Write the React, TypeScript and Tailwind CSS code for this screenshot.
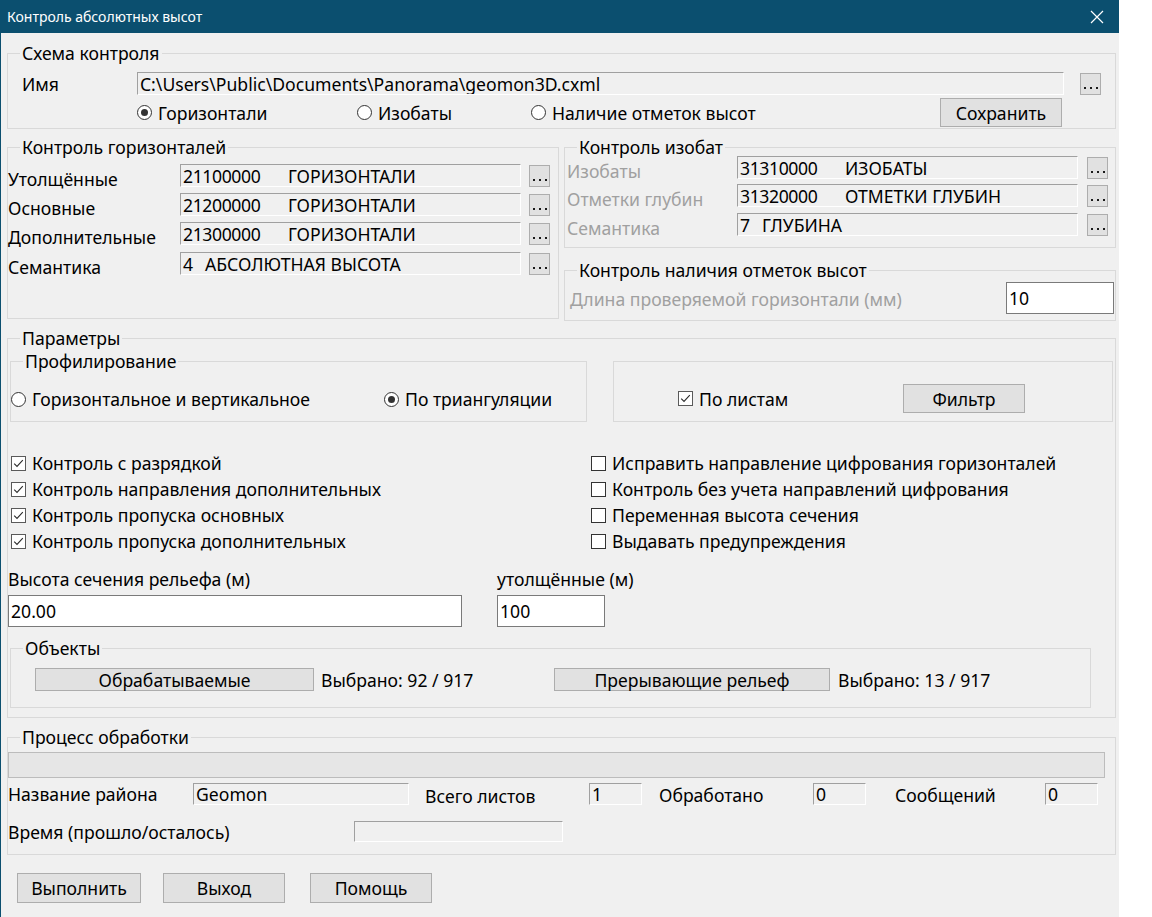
import React from "react";

type Kids = { children?: React.ReactNode; className?: string };

function Legend({ children, className = "" }: Kids) {
  return (
    <div className={`-mt-[10px] ml-[12px] w-fit bg-[#f0f0f0] px-[2px] leading-[18px] ${className}`}>
      {children}
    </div>
  );
}

function Radio({ checked }: { checked?: boolean }) {
  return (
    <span className="inline-flex h-[15px] w-[15px] shrink-0 items-center justify-center rounded-full border border-[#333333] bg-white">
      {checked && <span className="h-[7px] w-[7px] rounded-full bg-[#333333]" />}
    </span>
  );
}

function Check({ checked }: { checked?: boolean }) {
  return (
    <span
      className={`inline-flex h-[15px] w-[15px] shrink-0 items-center justify-center border bg-white ${
        checked ? "border-[#5a5a5a]" : "border-[#333333]"
      }`}
    >
      {checked && (
        <svg width="13" height="13" viewBox="0 0 13 13">
          <path d="M2.2 6.6 L5 9.4 L10.8 3.2" fill="none" stroke="#2b2b2b" strokeWidth="1.1" />
        </svg>
      )}
    </span>
  );
}

function Box({ children, className = "" }: Kids) {
  return (
    <div
      className={`flex items-center overflow-hidden whitespace-nowrap border border-t-[#a0a0a0] border-l-[#a0a0a0] border-r-white border-b-white bg-[#f0f0f0] pl-[2px] ${className}`}
    >
      {children}
    </div>
  );
}

function WhiteInput({ children, className = "" }: Kids) {
  return (
    <div className={`flex items-center border border-[#7a7a7a] bg-white pl-[2px] ${className}`}>{children}</div>
  );
}

function Btn({ children, className = "" }: Kids) {
  return (
    <div className={`flex items-center justify-center border border-[#adadad] bg-[#e1e1e1] ${className}`}>
      {children}
    </div>
  );
}

function Dots({ className = "" }: Kids) {
  return (
    <div
      className={`flex h-[22px] w-[21px] shrink-0 items-end justify-center gap-[4px] border border-[#adadad] bg-[#e1e1e1] pb-[5px] ${className}`}
    >
      <span className="h-[2px] w-[2px] bg-[#1a1a1a]" />
      <span className="h-[2px] w-[2px] bg-[#1a1a1a]" />
      <span className="h-[2px] w-[2px] bg-[#1a1a1a]" />
    </div>
  );
}

function Code({ code, name, wide = true }: { code: string; name: string; wide?: boolean }) {
  return (
    <>
      <span className={wide ? "w-[105px] shrink-0 tracking-[-0.4px]" : "w-[22px] shrink-0"}>{code}</span>
      <span>{name}</span>
    </>
  );
}

const horiz = [
  { label: "Утолщённые", code: "21100000", name: "ГОРИЗОНТАЛИ", mt: "mt-[8px]" },
  { label: "Основные", code: "21200000", name: "ГОРИЗОНТАЛИ", mt: "mt-[6px]" },
  { label: "Дополнительные", code: "21300000", name: "ГОРИЗОНТАЛИ", mt: "mt-[6px]" },
  { label: "Семантика", code: "4", name: "АБСОЛЮТНАЯ ВЫСОТА", mt: "mt-[7px]" },
];

const isobath = [
  { label: "Изобаты", code: "31310000", name: "ИЗОБАТЫ", mt: "mt-0" },
  { label: "Отметки глубин", code: "31320000", name: "ОТМЕТКИ ГЛУБИН", mt: "mt-[5px]" },
  { label: "Семантика", code: "7", name: "ГЛУБИНА", mt: "mt-[6px]" },
];

const checks = [
  ["Контроль с разрядкой", true, "Исправить направление цифрования горизонталей", false],
  ["Контроль направления дополнительных", true, "Контроль без учета направлений цифрования", false],
  ["Контроль пропуска основных", true, "Переменная высота сечения", false],
  ["Контроль пропуска дополнительных", true, "Выдавать предупреждения", false],
] as const;

export default function App() {
  return (
    <div className="h-[917px] w-[1152px] overflow-hidden bg-white font-['Noto_Sans',sans-serif] text-[17.6px] leading-[20px] text-black">
      <div className="h-[917px] w-[1119px] border-l border-[#0b4f6f] bg-[#f0f0f0]">
        {/* title bar */}
        <div className="-ml-px flex h-[33px] items-center bg-[#0b4f6f] pl-[7px] text-[14px] text-white">
          <span>Контроль абсолютных высот</span>
          <svg className="ml-auto mr-[15px]" width="14" height="14" viewBox="0 0 14 14">
            <path d="M1 1 L13 13 M13 1 L1 13" stroke="white" strokeWidth="1.2" />
          </svg>
        </div>

        <div className="pl-[6px] pr-[3px]">
          {/* Схема контроля */}
          <div className="mt-[20px] h-[76px] border border-[#d9d9d9]">
            <Legend>Схема контроля</Legend>
            <div className="mt-[10px] flex h-[23px] items-center">
              <span className="ml-[14px] w-[115px] shrink-0">Имя</span>
              <Box className="h-[23px] w-[927px]">C:\Users\Public\Documents\Panorama\geomon3D.cxml</Box>
              <Dots className="ml-[16px]" />
            </div>
            <div className="mt-[3px] flex h-[29px] items-center">
              <div className="ml-[129px] flex w-[220px] items-center gap-[6px]">
                <Radio checked />
                <span>Горизонтали</span>
              </div>
              <div className="flex w-[174px] items-center gap-[6px]">
                <Radio />
                <span>Изобаты</span>
              </div>
              <div className="flex w-[409px] items-center gap-[6px]">
                <Radio />
                <span>Наличие отметок высот</span>
              </div>
              <Btn className="h-[29px] w-[122px]">Сохранить</Btn>
            </div>
          </div>

          {/* Контроль горизонталей / изобат */}
          <div className="mt-[18px] flex items-start gap-[5px]">
            <div className="h-[172px] w-[552px] border border-[#d9d9d9]">
              <Legend>Контроль горизонталей</Legend>
              {horiz.map((r) => (
                <div key={r.label} className={`flex h-[23px] items-center ${r.mt}`}>
                  <span className="mt-[6px] w-[172px] shrink-0">{r.label}</span>
                  <Box className="h-[23px] w-[341px]">
                    <Code code={r.code} name={r.name} wide={r.code.length > 1} />
                  </Box>
                  <Dots className="ml-[8px]" />
                </div>
              ))}
            </div>

            <div className="w-[552px]">
              <div className="h-[101px] border border-[#d9d9d9]">
                <Legend>Контроль изобат</Legend>
                {isobath.map((r) => (
                  <div key={r.label} className={`flex h-[23px] items-center ${r.mt}`}>
                    <span className="ml-[2px] mt-[6px] w-[170px] shrink-0 text-[#a0a0a0]">{r.label}</span>
                    <Box className="h-[23px] w-[341px]">
                      <Code code={r.code} name={r.name} wide={r.code.length > 1} />
                    </Box>
                    <Dots className="ml-[9px]" />
                  </div>
                ))}
              </div>
              <div className="mt-[22px] h-[51px] border border-[#d9d9d9]">
                <Legend>Контроль наличия отметок высот</Legend>
                <div className="mt-[3px] flex h-[32px] items-center">
                  <span className="ml-[5px] mt-[2px] text-[#a0a0a0]">Длина проверяемой горизонтали (мм)</span>
                  <WhiteInput className="ml-auto mr-px h-[32px] w-[108px]">10</WhiteInput>
                </div>
              </div>
            </div>
          </div>

          {/* Параметры */}
          <div className="mt-[17px] h-[380px] border border-[#d9d9d9]">
            <Legend>Параметры</Legend>
            <div className="mt-[14px] flex items-start">
              <div className="ml-[2px] h-[61px] w-[577px] border border-[#d9d9d9]">
                <Legend>Профилирование</Legend>
                <div className="mt-[19px] flex h-[20px] items-center">
                  <div className="flex w-[373px] items-center gap-[6px]">
                    <Radio />
                    <span>Горизонтальное и вертикальное</span>
                  </div>
                  <div className="flex items-center gap-[6px]">
                    <Radio checked />
                    <span>По триангуляции</span>
                  </div>
                </div>
              </div>
              <div className="ml-[26px] h-[61px] w-[500px] border border-[#d9d9d9]">
                <div className="mt-[22px] flex h-[29px] items-center">
                  <div className="ml-[64px] flex w-[225px] items-center gap-[6px]">
                    <Check checked />
                    <span>По листам</span>
                  </div>
                  <Btn className="h-[29px] w-[122px]">Фильтр</Btn>
                </div>
              </div>
            </div>

            <div className="ml-[3px] mt-[31px] grid grid-cols-[580px_1fr] gap-y-[6px]">
              {checks.map(([a, ca, b, cb]) => (
                <React.Fragment key={a}>
                  <div className="flex h-[20px] items-center gap-[6px]">
                    <Check checked={ca} />
                    <span>{a}</span>
                  </div>
                  <div className="flex h-[20px] items-center gap-[6px]">
                    <Check checked={cb} />
                    <span>{b}</span>
                  </div>
                </React.Fragment>
              ))}
            </div>

            <div className="mt-[18px] flex">
              <div className="w-[489px]">
                <div className="h-[20px]">Высота сечения рельефа (м)</div>
                <WhiteInput className="mt-[6px] h-[32px] w-[454px]">20.00</WhiteInput>
              </div>
              <div>
                <div className="h-[20px]">утолщённые (м)</div>
                <WhiteInput className="mt-[6px] h-[32px] w-[108px]">100</WhiteInput>
              </div>
            </div>

            <div className="ml-[2px] mt-[21px] h-[60px] w-[1081px] border border-[#d9d9d9]">
              <Legend>Объекты</Legend>
              <div className="mt-[11px] flex h-[23px] items-center">
                <div className="ml-[24px] flex w-[519px] items-center">
                  <Btn className="h-[23px] w-[279px]">Обрабатываемые</Btn>
                  <span className="ml-[7px]">Выбрано: 92 / 917</span>
                </div>
                <div className="flex items-center">
                  <Btn className="h-[23px] w-[276px]">Прерывающие рельеф</Btn>
                  <span className="ml-[8px]">Выбрано: 13 / 917</span>
                </div>
              </div>
            </div>
          </div>

          {/* Процесс обработки */}
          <div className="mt-[19px] h-[118px] border border-[#d9d9d9]">
            <Legend>Процесс обработки</Legend>
            <div className="mt-[6px] h-[26px] w-[1097px] border border-[#bcbcbc] bg-[#e6e6e6]" />
            <div className="mt-[5px] flex h-[22px] items-center">
              <span className="w-[185px] shrink-0">Название района</span>
              <Box className="h-[22px] w-[216px]">Geomon</Box>
              <span className="ml-[16px] mt-[4px] w-[164px] shrink-0">Всего листов</span>
              <Box className="h-[22px] w-[53px]">1</Box>
              <span className="ml-[17px] mt-[2px] w-[154px] shrink-0">Обработано</span>
              <Box className="h-[22px] w-[53px]">0</Box>
              <span className="ml-[29px] mt-[2px] w-[150px] shrink-0">Сообщений</span>
              <Box className="h-[22px] w-[53px]">0</Box>
            </div>
            <div className="mt-[16px] flex h-[21px] items-center">
              <span className="w-[346px] shrink-0">Время (прошло/осталось)</span>
              <Box className="h-[21px] w-[209px]" />
            </div>
          </div>

          {/* buttons */}
          <div className="mt-[18px] flex">
            <Btn className="ml-[10px] h-[30px] w-[124px]">Выполнить</Btn>
            <Btn className="ml-[22px] h-[30px] w-[122px]">Выход</Btn>
            <Btn className="ml-[25px] h-[30px] w-[122px]">Помощь</Btn>
          </div>
        </div>
      </div>
    </div>
  );
}
